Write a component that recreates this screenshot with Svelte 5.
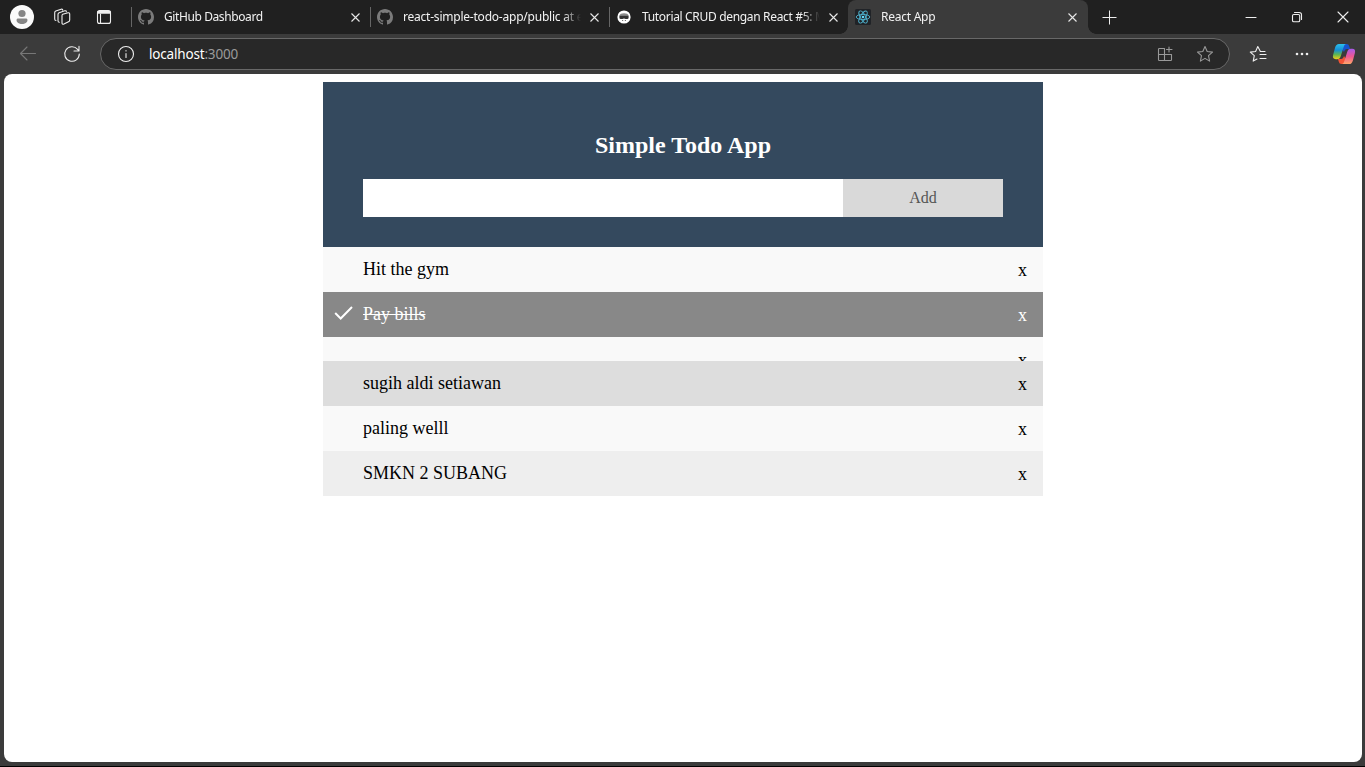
<script>
  const tabs = [
    { icon: 'github', title: 'GitHub Dashboard', spacing: '-0.4px' },
    { icon: 'github', title: 'react-simple-todo-app/public at e4', spacing: '-0.22px' },
    { icon: 'mask', title: 'Tutorial CRUD dengan React #5: Men', spacing: '-0.33px' },
    { icon: 'react', title: 'React App', spacing: '-0.25px', active: true },
  ];

  let todos = $state([
    { text: 'Hit the gym' },
    { text: 'Pay bills', done: true },
    { text: '' },
    { text: 'sugih aldi setiawan', hovered: true },
    { text: 'paling welll' },
    { text: 'SMKN 2 SUBANG' },
  ]);
  let draft = $state('');

  function add() {
    if (draft.trim()) {
      todos.push({ text: draft });
      draft = '';
    }
  }
</script>

{#snippet cross()}
  <svg class="cross" width="9" height="9" viewBox="0 0 9 9"><path d="M.5.5l8 8M8.5.5l-8 8" /></svg>
{/snippet}

<div class="browser">
  <div class="tabstrip">
    <div class="leading">
      <svg width="24" height="24" viewBox="0 0 24 24">
        <circle cx="12" cy="12" r="12" fill="#fafafa" />
        <circle cx="12" cy="8.5" r="3.6" fill="#858585" />
        <path d="M8.2 13.5h7.6c1.1 0 1.7.6 1.7 1.5 0 2.4-2.4 4-5.5 4s-5.5-1.6-5.5-4c0-.9.6-1.5 1.7-1.5z" fill="#858585" />
      </svg>
      <svg class="line spaces" width="18" height="18" viewBox="0 0 18 18">
        <path d="M9.7 6.3l5.3-1.5c1.1-.3 1.7.3 1.7 1.2v6c0 .9-.4 1.5-1.2 1.8l-4.6 2.3c-1.2.4-1.9-.1-1.9-1.2V7.7c0-.8.1-1.2.7-1.4z" />
        <path d="M6.3 14.3c-1-.1-1.3-.7-1.3-1.6V6.4c0-.9.3-1.4 1.1-1.7l5.7-1.9c.9-.3 1.5 0 1.5.9M3 12.5c-1-.1-1.3-.7-1.3-1.6V4.8c0-.9.3-1.4 1.1-1.7l5.3-1.9c.9-.3 1.6 0 1.6.9" />
      </svg>
      <svg class="line" width="16" height="16" viewBox="0 0 16 16">
        <rect x="1.5" y="1.6" width="13" height="12.8" rx="2" />
        <path d="M2.3 3.4h11.4" stroke-width="2.6" /><path d="M4.5 5v9" />
      </svg>
    </div>
    {#each tabs as tab}
      <div class="tab" class:active={tab.active}>
        {#if tab.icon === 'github'}
          <svg class="favicon" viewBox="0 0 16 16"><path fill="#7b7b7b" d="M8 0C3.58 0 0 3.58 0 8c0 3.54 2.29 6.53 5.47 7.59.4.07.55-.17.55-.38 0-.19-.01-.82-.01-1.49-2.01.37-2.53-.49-2.69-.94-.09-.23-.48-.94-.82-1.13-.28-.15-.68-.52-.01-.53.63-.01 1.08.58 1.23.82.72 1.21 1.87.87 2.33.66.07-.52.28-.87.51-1.07-1.78-.2-3.64-.89-3.64-3.95 0-.87.31-1.59.82-2.15-.08-.2-.36-1.02.08-2.12 0 0 .67-.21 2.2.82.64-.18 1.32-.27 2-.27s1.36.09 2 .27c1.53-1.04 2.2-.82 2.2-.82.44 1.1.16 1.92.08 2.12.51.56.82 1.27.82 2.15 0 3.07-1.87 3.75-3.65 3.95.29.25.54.73.54 1.48 0 1.07-.01 1.93-.01 2.2 0 .21.15.46.55.38A8.01 8.01 0 0 0 16 8c0-4.42-3.58-8-8-8z" /></svg>
        {:else if tab.icon === 'mask'}
          <svg class="favicon" viewBox="0 0 16 16">
            <circle cx="8" cy="8" r="6.6" fill="#fff" />
            <path d="M3.6 6.6Q4 4.2 8 4.2T12.400 6.600z" fill="#8a8a8a" />
            <path d="M3.400 6.500h9.200V8.800q0 1.200-1.400 1.200H9.600L8 9.400 6.400 10H4.800Q3.400 10 3.400 8.800z" fill="#333" />
            <path d="M6 11.500h1.200M8.800 11.500H10" stroke="#777" />
          </svg>
        {:else}
          <svg class="favicon" viewBox="0 0 16 16">
            <rect width="16" height="16" rx="1.5" fill="#202327" />
            <g fill="none" stroke="#4fb3cf" stroke-width=".9">
              <ellipse cx="8" cy="8" rx="6.8" ry="2.6" />
              <ellipse cx="8" cy="8" rx="6.8" ry="2.6" transform="rotate(60 8 8)" />
              <ellipse cx="8" cy="8" rx="6.8" ry="2.6" transform="rotate(120 8 8)" />
            </g>
            <circle cx="8" cy="8" r="1.3" fill="#61dafb" />
          </svg>
        {/if}
        <span class="title" style="letter-spacing: {tab.spacing}">{tab.title}</span>
        {@render cross()}
      </div>
    {/each}
    <svg class="newtab" width="15" height="15" viewBox="0 0 15 15"><path d="M7.5.5v14M.5 7.5h14" /></svg>
    <div class="window-controls">
      <svg class="line" width="12" height="12" viewBox="0 0 12 12"><path d="M1 6.5h10" /></svg>
      <svg class="line" width="12" height="12" viewBox="0 0 12 12">
        <rect x="1.5" y="3.5" width="7.2" height="7.2" rx="1.3" />
        <path d="M3.5 1.5h4.7a2.3 2.3 0 0 1 2.3 2.3v4.7" />
      </svg>
      <svg class="line" width="12" height="12" viewBox="0 0 12 12"><path d="M1 1l10 10M11 1L1 11" /></svg>
    </div>
  </div>

  <div class="toolbar">
    <div class="nav">
      <svg class="line dim" width="18" height="16" viewBox="0 0 18 16"><path d="M16.5 7.5H1.5M8 1L1.5 7.5 8 14" /></svg>
      <svg class="line reload" width="18" height="18" viewBox="0 0 18 18"><path d="M16.3 9A7.3 7.3 0 1 1 14.6 4.3L16 6M16 1.2V6h-5" /></svg>
    </div>
    <div class="address">
      <svg class="line" width="18" height="18" viewBox="0 0 18 18"><circle cx="9" cy="9" r="7.5" /><path d="M9 8.5v4M9 5.5v.5" /></svg>
      <span class="url">localhost<i>:3000</i></span>
      <svg class="line muted" width="16" height="16" viewBox="0 0 16 16">
        <path d="M7.5 2.5H2.3a.8.8 0 0 0-.8.8v10.4a.8.8 0 0 0 .8.8h11.4a.8.8 0 0 0 .8-.8V8.5h-13M7.5 2.5v12M12 1v5M9.5 3.5h5.5" />
      </svg>
      <svg class="line muted star" width="18" height="18" viewBox="0 0 18 18"><path d="M9 1.6l2.2 4.9 5.3.6-4 3.6 1.1 5.4L9 13.4l-4.6 2.7 1.1-5.4-4-3.6 5.3-.6z" /></svg>
    </div>
    <div class="actions">
      <svg class="line" width="18" height="18" viewBox="0 0 18 18">
        <path d="M16 6.5h-4.6L8.8 1.6 6.6 6.5l-5.3.6 4 3.6-1.1 5.4L8 14M11 9.5h6M11 13.5h6" />
      </svg>
      <svg class="dots" width="14" height="4" viewBox="0 0 14 4" fill="#eee"><circle cx="2" cy="2" r="1.3" /><circle cx="7" cy="2" r="1.3" /><circle cx="12" cy="2" r="1.3" /></svg>
      <svg width="24" height="22" viewBox="0 0 24 22">
        <defs>
          <linearGradient id="cool" x1="0" y1="0" x2="0" y2="1"><stop offset="0" stop-color="#2bc0ee" /><stop offset=".4" stop-color="#168fd5" /><stop offset=".7" stop-color="#62b74e" /><stop offset="1" stop-color="#f4ce19" /></linearGradient>
          <linearGradient id="warm" x1="0" y1="0" x2="0" y2="1"><stop offset="0" stop-color="#a75bea" /><stop offset=".5" stop-color="#ed5793" /><stop offset="1" stop-color="#ffa568" /></linearGradient>
        </defs>
        <path d="M7 1h7.5c1.6 0 2.3.8 2.8 2.5l.7 2.4h-3c-1.6 0-2.4 1-3 3z" fill="#1753ce" />
        <path d="M17 21H9.5c-1.6 0-2.3-.8-2.8-2.5L6 16h3c1.6 0 2.4-1 3-3z" fill="#f25335" />
        <path d="M7 1h7c-1.6.4-2 2-2.5 3.5L8.8 13c-.8 2.4-1.6 3.2-3.8 3.2H3.8c-2.4 0-3.4-1.5-2.7-4.1l2-7.5C3.8 2.2 5 1 7 1z" fill="url(#cool)" />
        <path d="M17 21h-7c1.6-.4 2-2 2.5-3.5L15.2 9c.8-2.4 1.6-3.2 3.8-3.2h1.2c2.4 0 3.4 1.5 2.7 4.1l-2 7.5C20.2 19.8 19 21 17 21z" fill="url(#warm)" />
      </svg>
    </div>
  </div>

  <main class="page">
    <div class="app">
      <header>
        <h2>Simple Todo App</h2>
        <div class="entry">
          <input type="text" aria-label="New todo" bind:value={draft} />
          <button onclick={add}>Add</button>
        </div>
      </header>
      <ul>
        {#each todos as todo, i}
          <li class:done={todo.done} class:hovered={todo.hovered}>
            {#if todo.done}
              <svg class="check" width="20" height="16" viewBox="0 0 20 16"><path d="M1.2 8l5.500 5.500L18 2" /></svg>
            {/if}
            <span class="label">{todo.text}</span>
            <button class="remove" onclick={() => todos.splice(i, 1)}>x</button>
          </li>
        {/each}
      </ul>
    </div>
  </main>
</div>

<style>
  :global(body) { margin: 0; overflow: hidden; }
  * { box-sizing: border-box; }
  svg { display: block; flex: none; }
  .browser {
    display: flex; flex-direction: column;
    height: 767px; background: #3b3b3b; border-bottom: 1px solid #000;
    font-family: "Noto Sans", "Open Sans", sans-serif;
  }
  .line { fill: none; stroke: #eee; stroke-width: 1.1; stroke-linejoin: round; stroke-linecap: round; }
  .line.dim { stroke: #777; }
  .line.muted { stroke: #999; }

  .tabstrip { display: flex; height: 34px; background: #202020; align-items: center; flex: none; }
  .leading { display: flex; align-items: center; width: 131px; padding-left: 10px; }
  .spaces { margin: 0 25px 0 19px; }
  .tab {
    position: relative; display: flex; align-items: center;
    width: 239px; height: 34px; padding: 0 10px 0 7px; color: #f2f2f2; font-size: 12px;
  }
  .tab:not(.active)::before {
    content: ""; position: absolute; left: 0; top: 7px; width: 1px; height: 20px; background: #666;
  }
  .tab.active { width: 240px; padding-right: 11px; background: #3b3b3b; border-radius: 8px 8px 0 0; }
  .tab.active::before, .tab.active::after {
    content: ""; position: absolute; bottom: 0; width: 8px; height: 8px;
  }
  .tab.active::before { left: -8px; background: radial-gradient(circle at 0 0, #202020 7.5px, #3b3b3b 8px); }
  .tab.active::after { right: -8px; background: radial-gradient(circle at 100% 0, #202020 7.5px, #3b3b3b 8px); }
  .favicon { width: 16px; height: 16px; }
  .title {
    flex: 1; min-width: 0; margin: 0 9px 0 10px; line-height: 18px; white-space: nowrap; overflow: hidden;
    mask-image: linear-gradient(to right, #000 calc(100% - 18px), transparent);
  }
  .cross { stroke: #e8e8e8; stroke-width: 1.1; }
  .newtab { margin-left: 14px; stroke: #eee; }
  .window-controls { display: flex; gap: 34px; margin-left: auto; padding-right: 16px; }

  .toolbar { display: flex; height: 40px; align-items: center; flex: none; }
  .nav { display: flex; align-items: center; width: 100px; padding-left: 19px; gap: 26px; }
  .address {
    display: flex; flex: none; align-items: center; width: 1130px; height: 32px; padding: 0 15px 0 16px;
    background: #282828; border: 1px solid #686868; border-radius: 16px;
  }
  .url { flex: 1; margin-left: 14px; color: #fff; font-size: 13.5px; line-height: 18px; letter-spacing: -.18px; }
  .url i { color: #9a9a9a; font-style: normal; }
  .star { margin-left: 23px; }
  .actions { display: flex; flex: 1; align-items: center; padding: 0 9px 0 19px; }
  .dots { margin: 0 23px 0 28px; }

  .page { flex: 1; margin: 0 3px 4px 4px; padding-top: 8px; background: #fff; border-radius: 8px; }
  .app { width: 720px; margin: 0 auto; font-family: "Liberation Serif", serif; }
  header { height: 165px; padding: 50px 40px 30px; background: #34495e; color: #fff; text-align: center; }
  h2 { margin: 0 0 20px; font-size: 24px; line-height: 27px; }
  .entry { display: flex; height: 38px; }
  input { width: 75%; border: 0; padding: 10px; font: 16px "Liberation Serif", serif; outline: 0; }
  .entry button { width: 25%; border: 0; padding: 0; background: #d9d9d9; color: #555; font: 16px "Liberation Serif", serif; }
  ul { margin: 0; padding: 0; list-style: none; }
  li {
    position: relative; display: flow-root; min-height: 24px; padding: 12px 8px 12px 40px;
    overflow: hidden; background: #f9f9f9; font-size: 18px; line-height: 21px;
  }
  li:nth-child(even) { background: #eee; }
  li.hovered { background: #ddd; }
  li.done { background: #888; color: #fff; }
  .label { display: block; }
  .done .label { text-decoration: line-through; }
  .remove {
    position: absolute; right: 0; top: 0; padding: 13px 16px 11px; border: 0;
    background: none; color: inherit; font: 18px/21px "Liberation Serif", serif;
  }
  .check { position: absolute; left: 11px; top: 13px; fill: none; stroke: #fff; stroke-width: 2; }
</style>
